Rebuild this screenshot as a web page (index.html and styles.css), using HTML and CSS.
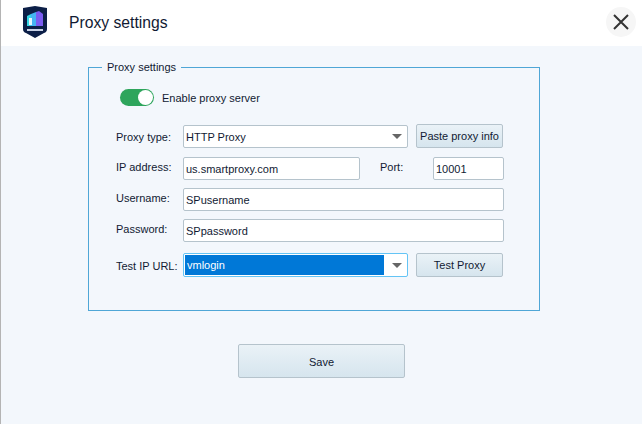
FILE: index.html
```html
<!DOCTYPE html>
<html lang="en">
<head>
  <meta charset="UTF-8">
  <title>Proxy settings</title>
  <link rel="stylesheet" href="styles.css">
</head>
<body>
  <header class="title-bar">
    <svg class="logo" width="26" height="32" viewBox="0 0 26 32">
      <path d="M1 2 L13 0 L25 2 V23 Q25 26 22 27 L13 32 L4 27 Q1 26 1 23 Z" fill="#0c1f47"/>
      <path d="M5 10 L9 8 V20 H5 Z" fill="#35d6e6"/>
      <path d="M9 8 L14 6 V20 H9 Z" fill="#45b4f2"/>
      <path d="M14 6 L17 5 L21 8 V20 H14 Z" fill="#7a5cf0"/>
      <rect x="7" y="12" width="3" height="7" fill="#e6f6ff"/>
      <rect x="5" y="23" width="16" height="2" fill="#c8d2e6"/>
    </svg>
    <h1 class="title">Proxy settings</h1>
    <button class="close-btn" aria-label="Close">
      <svg width="18" height="18" viewBox="0 0 18 18">
        <path d="M2 2 L16 16 M16 2 L2 16" stroke="#333" stroke-width="2" fill="none"/>
      </svg>
    </button>
  </header>

  <main class="content">
    <fieldset class="group">
      <legend>Proxy settings</legend>

      <div class="toggle-row">
        <span class="toggle"><span class="knob"></span></span>
        <span>Enable proxy server</span>
      </div>

      <div class="row row-type">
        <label class="down">Proxy type:</label>
        <div class="combo wide"><span class="combo-text">HTTP Proxy</span><span class="arrow"></span></div>
        <button class="btn small">Paste proxy info</button>
      </div>

      <div class="row">
        <label class="up">IP address:</label>
        <div class="field ip">us.smartproxy.com</div>
        <label class="port-label up">Port:</label>
        <div class="field port">10001</div>
      </div>

      <div class="row">
        <label class="up">Username:</label>
        <div class="field full">SPusername</div>
      </div>

      <div class="row">
        <label class="up">Password:</label>
        <div class="field full">SPpassword</div>
      </div>

      <div class="row row-test">
        <label class="down">Test IP URL:</label>
        <div class="combo wide focused"><span class="combo-text selected">vmlogin</span><span class="arrow"></span></div>
        <button class="btn small">Test Proxy</button>
      </div>
    </fieldset>

    <div class="actions">
      <button class="btn save">Save</button>
    </div>
  </main>
</body>
</html>
```

FILE: styles.css
```css
* {
  box-sizing: border-box;
  margin: 0;
  padding: 0;
}

body {
  font-family: "Liberation Sans", Arial, sans-serif;
  font-size: 11px;
  color: #111a33;
  background-color: #f3f7fc;
  border-left: 1px solid #b4b4b4;
  height: 424px;
  overflow: hidden;
}

.title-bar {
  display: flex;
  align-items: center;
  height: 46px;
  padding-left: 21px;
  background-color: #fff;
}

.logo {
  margin-top: -2px;
}

.title {
  flex: 1;
  margin-left: 21px;
  font-size: 15.7px;
  font-weight: 400;
  margin-top: -1px;
}

.close-btn {
  display: flex;
  align-items: center;
  justify-content: center;
  width: 30px;
  height: 30px;
  margin-right: 6px;
  margin-top: -2px;
  border: none;
  border-radius: 50%;
  background-color: #f6f6f6;
}

.content {
  padding: 13px 0 0 87px;
}

.group {
  width: 452px;
  min-width: 0;
  height: 252px;
  padding: 0 35px 0 26px;
  border: 1px solid #4fa6d6;
}

.group legend {
  margin-left: -13px;
  padding: 0 5px;
  line-height: 16px;
}

.toggle-row {
  display: flex;
  align-items: center;
  gap: 8px;
  margin: 14px 0 18px 5px;
}

.toggle {
  display: block;
  position: relative;
  width: 34px;
  height: 17px;
  border-radius: 9px;
  background-color: #2ea55c;
}

.knob {
  position: absolute;
  top: 1px;
  right: 1px;
  width: 15px;
  height: 15px;
  border-radius: 50%;
  background-color: #fff;
}

.row {
  display: flex;
  align-items: center;
  margin-bottom: 8px;
}

.row-type {
  margin-bottom: 9px;
}

.row-type .combo,
.row-test .combo {
  margin-top: 1px;
}

.row-test {
  margin-top: 10px;
}

.row label {
  flex: none;
  width: 68px;
  padding-left: 1px;
}

.row label.up {
  margin-top: -3px;
}

.row label.down {
  margin-top: 2px;
}

.row label.port-label {
  width: 54px;
  margin-left: 19px;
}

.field {
  height: 23px;
  padding-left: 2px;
  line-height: 22px;
  background-color: #fff;
  border: 1px solid #b5c3cc;
  border-radius: 2px;
}

.ip {
  width: 177px;
}

.port {
  width: 71px;
}

.full {
  width: 321px;
}

.combo {
  display: flex;
  align-items: center;
  height: 23px;
  background-color: #fff;
  border: 1px solid #b5c3cc;
  border-radius: 2px;
}

.wide {
  width: 225px;
}

.combo-text {
  flex: 1;
  padding-left: 2px;
  line-height: 20px;
}

.combo.focused {
  height: 24px;
  padding: 1px;
  border-color: #64c4f5;
}

.combo-text.selected {
  padding-left: 2px;
  color: #fff;
  background-color: #0078d7;
}

.arrow {
  width: 0;
  height: 0;
  margin: 0 5px 0 6px;
  border-left: 5px solid transparent;
  border-right: 5px solid transparent;
  border-top: 5px solid #666;
}

.focused .arrow {
  margin: 0 4px 0 8px;
}

.btn {
  font: inherit;
  color: #111a33;
  background: linear-gradient(#eaf2f7, #d6e5ee);
  border: 1px solid #b5c3cc;
  border-radius: 2px;
}

.small {
  width: 87px;
  height: 24px;
  margin-left: 8px;
}

.actions {
  padding: 33px 0 0 150px;
}

.save {
  width: 167px;
  height: 34px;
  padding-top: 2px;
}
```
